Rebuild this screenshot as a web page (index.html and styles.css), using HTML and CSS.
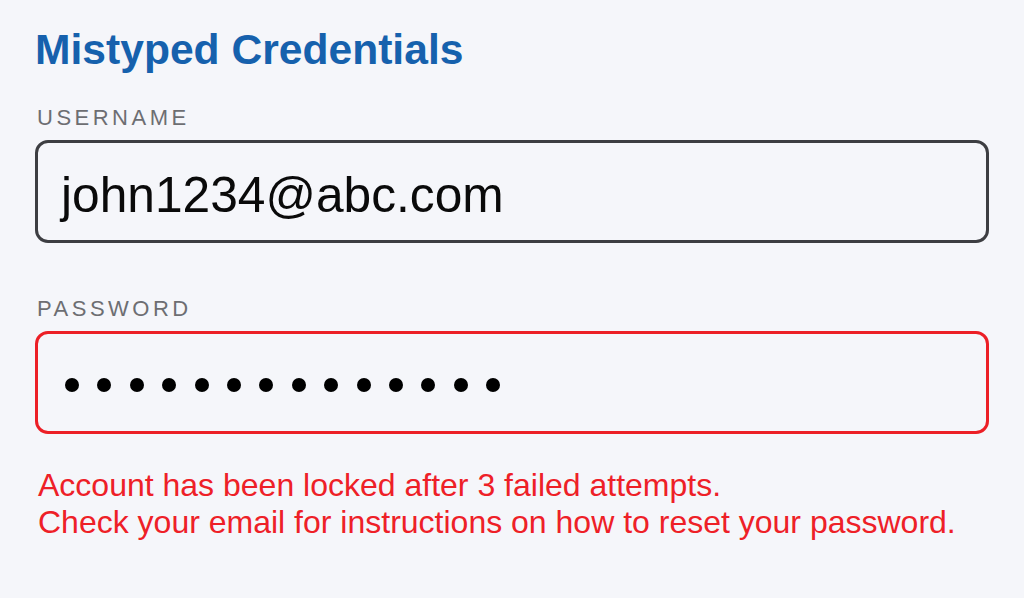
FILE: index.html
```html
<!DOCTYPE html>
<html lang="en">
<head>
<meta charset="utf-8">
<title>Mistyped Credentials</title>
<link rel="stylesheet" href="styles.css">
</head>
<body>
<main class="form">
  <h1 class="title">Mistyped Credentials</h1>
  <div class="field">
    <div class="label">USERNAME</div>
    <div class="box">
      <span class="value">john1234@abc.com</span>
    </div>
  </div>
  <div class="field field-pw">
    <div class="label">PASSWORD</div>
    <div class="box box-error" aria-label="password">
      <div class="dots">
        <span class="dot"></span><span class="dot"></span><span class="dot"></span><span class="dot"></span><span class="dot"></span><span class="dot"></span><span class="dot"></span><span class="dot"></span><span class="dot"></span><span class="dot"></span><span class="dot"></span><span class="dot"></span><span class="dot"></span><span class="dot"></span>
      </div>
    </div>
  </div>
  <p class="error">Account has been locked after 3 failed attempts.<br>Check your email for instructions on how to reset your password.</p>
</main>
</body>
</html>
```

FILE: styles.css
```css
html, body {
  margin: 0;
  padding: 0;
  background: #f5f6fa;
}
body {
  font-family: "Liberation Sans", Arial, sans-serif;
  width: 1024px;
  height: 598px;
  overflow: hidden;
}
.form {
  padding: 24px 35px 0 35px;
  display: flex;
  flex-direction: column;
}
.title {
  margin: 0 0 31px 0;
  font-size: 42.6px;
  line-height: 50px;
  font-weight: 700;
  color: #1661ad;
}
.field {
  display: flex;
  flex-direction: column;
}
.field-pw {
  margin-top: 53px;
}
.label {
  font-size: 22px;
  line-height: 26px;
  letter-spacing: 3.5px;
  color: #6d6e72;
  padding-left: 2px;
  margin-bottom: 9px;
}
.box {
  box-sizing: border-box;
  height: 103px;
  border: 3px solid #3d3e42;
  border-radius: 13px;
}
.value {
  display: block;
  padding: 24px 0 0 23px;
  font-size: 49.7px;
  line-height: 56px;
  color: #0a0a0a;
}
.box-error {
  border-color: #ec1f26;
}
.dots {
  display: flex;
  gap: 18.4px;
  padding: 44px 0 0 27px;
}
.dot {
  width: 14px;
  height: 14px;
  border-radius: 50%;
  background: #000;
}
.error {
  margin: 33px 0 0 0;
  padding-left: 3px;
  font-size: 32px;
  line-height: 37px;
  color: #ee2027;
}
```
